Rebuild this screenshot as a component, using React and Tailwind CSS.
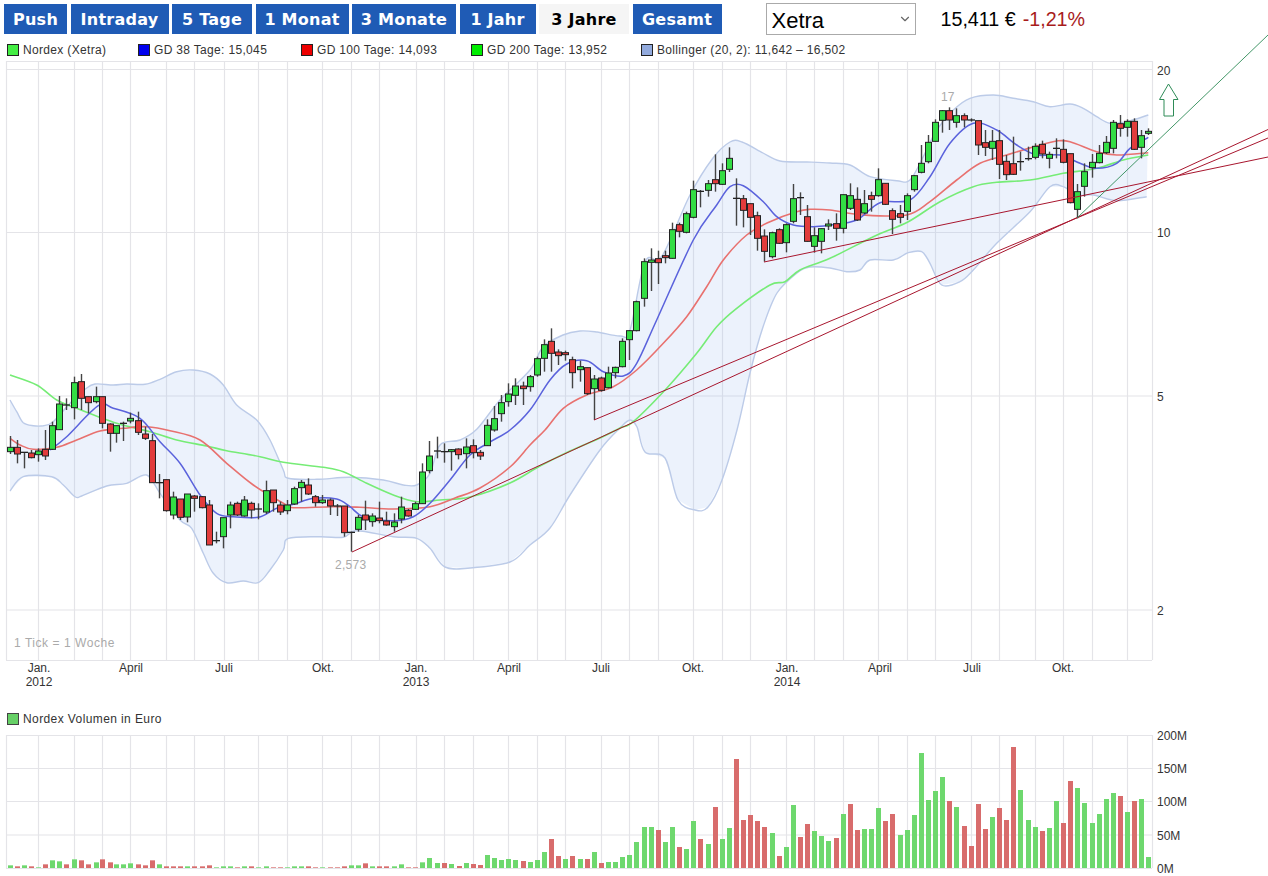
import React from 'react';
import { ChevronDown } from 'lucide-react';

const tabs = [
  { label: 'Push', width: 'w-[63px]' },
  { label: 'Intraday', width: 'w-[98px]' },
  { label: '5 Tage', width: 'w-[80px]' },
  { label: '1 Monat', width: 'w-[93px]' },
  { label: '3 Monate', width: 'w-[104px]' },
  { label: '1 Jahr', width: 'w-[76px]' },
  { label: '3 Jahre', width: 'w-[90px]', active: true },
  { label: 'Gesamt', width: 'w-[89px]' },
];

const legend = [
  { label: 'Nordex (Xetra)', color: 'bg-[#44ee44]', width: 'w-[131px]' },
  { label: 'GD 38 Tage: 15,045', color: 'bg-[#0000ee]', width: 'w-[163px]' },
  { label: 'GD 100 Tage: 14,093', color: 'bg-[#ee0000]', width: 'w-[170px]' },
  { label: 'GD 200 Tage: 13,952', color: 'bg-[#00ee00]', width: 'w-[170px]' },
  { label: 'Bollinger (20, 2): 11,642 – 16,502', color: 'bg-[#92aadd]', width: 'w-[260px]' },
];

// all data read from zoomed crops, so [x, y] are crop coords scaled 3x
const crop = (ox, oy, pts) => pts.map(([x, y]) => [ox + x / 3, oy + y / 3]);

// [x, type, bodyTop, bodyBottom, wickTop, wickBottom] g/r/d (d = doji tick)
const candleRows = (ox, oy, rows) =>
  rows.map(([x, t, a, b, h, l]) => ({
    x: ox + x / 3,
    t,
    top: oy + a / 3,
    bottom: oy + b / 3,
    high: oy + h / 3,
    low: oy + l / 3,
  }));

const candles = [
  ...candleRows(0, 360, [
    [31, 'g', 262, 275, 228, 282], [52, 'r', 262, 282, 240, 310], [73, 'd', 277, 277, 277, 325],
    [94, 'r', 279, 293, 270, 295], [115, 'g', 273, 284, 265, 305], [136, 'r', 268, 288, 210, 300],
    [157, 'g', 197, 268, 185, 270], [178, 'g', 132, 209, 108, 210], [199, 'd', 135, 135, 115, 150],
    [222, 'g', 68, 143, 50, 178], [244, 'r', 65, 115, 42, 150], [265, 'r', 110, 128, 110, 160],
    [287, 'g', 110, 125, 80, 130], [307, 'r', 110, 190, 110, 205], [329, 'r', 192, 220, 190, 275],
    [349, 'g', 197, 220, 197, 248], [370, 'd', 190, 190, 185, 243], [391, 'g', 175, 183, 158, 190],
    [415, 'r', 182, 217, 155, 225], [436, 'r', 222, 235, 200, 240], [457, 'r', 242, 368, 222, 368],
    [478, 'd', 368, 368, 342, 415], [499, 'r', 359, 452, 359, 455], [520, 'g', 411, 465, 395, 478],
    [541, 'r', 417, 472, 417, 480], [562, 'g', 402, 471, 402, 487], [583, 'r', 408, 415, 405, 455],
    [607, 'r', 410, 443, 408, 445], [628, 'r', 435, 555, 420, 555], [649, 'd', 542, 542, 515, 550],
    [670, 'g', 473, 530, 473, 565], [691, 'g', 435, 465, 425, 505], [712, 'r', 430, 465, 425, 468],
    [733, 'g', 420, 468, 408, 470], [754, 'r', 430, 450, 425, 475], [775, 'd', 447, 447, 430, 478],
    [799, 'g', 392, 456, 362, 462], [820, 'r', 390, 428, 390, 455], [841, 'r', 435, 456, 425, 465],
    [862, 'g', 435, 452, 420, 463], [883, 'g', 386, 432, 380, 435], [904, 'g', 367, 383, 360, 425],
    [925, 'r', 375, 402, 355, 405], [946, 'r', 410, 428, 405, 440], [967, 'g', 420, 428, 405, 432],
    [991, 'r', 420, 438, 415, 465], [1012, 'd', 438, 438, 432, 468], [1033, 'r', 438, 518, 438, 530],
    [1054, 'd', 517, 517, 515, 575], [1075, 'g', 472, 508, 465, 515], [1096, 'r', 465, 480, 422, 510],
    [1117, 'g', 468, 485, 460, 500], [1138, 'r', 474, 482, 425, 490], [1159, 'r', 483, 495, 455, 497],
    [1183, 'g', 486, 500, 460, 515], [1204, 'g', 441, 477, 410, 490], [1225, 'r', 451, 468, 447, 470],
    [1246, 'g', 431, 448, 425, 450], [1267, 'g', 336, 431, 310, 432], [1288, 'g', 288, 332, 243, 340],
  ]),
  ...candleRows(425, 380, [
    [35, 'd', 213, 213, 170, 235], [56, 'd', 215, 215, 190, 248], [77, 'g', 209, 215, 207, 272],
    [100, 'r', 207, 224, 205, 238], [122, 'g', 201, 221, 175, 265], [144, 'r', 197, 218, 178, 235],
    [165, 'r', 217, 228, 210, 240], [185, 'g', 136, 197, 118, 198],
  ]),
  ...candleRows(430, 130, [
    [191, 'g', 866, 900, 828, 905], [212, 'g', 818, 851, 795, 875], [233, 'g', 792, 815, 760, 830],
    [254, 'g', 768, 796, 745, 825], [278, 'r', 768, 776, 755, 825], [299, 'g', 740, 770, 735, 785],
    [320, 'g', 686, 735, 680, 740], [341, 'g', 644, 685, 628, 725], [362, 'r', 634, 670, 595, 725],
    [383, 'r', 666, 677, 658, 705], [404, 'r', 668, 674, 662, 692], [426, 'r', 689, 728, 680, 775],
    [450, 'g', 710, 719, 692, 755], [471, 'r', 713, 791, 713, 795], [492, 'g', 747, 776, 735, 870],
    [513, 'r', 744, 781, 740, 785], [534, 'g', 729, 773, 710, 775], [555, 'g', 712, 728, 710, 745],
    [575, 'g', 634, 710, 625, 712], [596, 'g', 602, 629, 600, 690], [617, 'g', 515, 602, 512, 604],
    [642, 'g', 395, 505, 385, 530], [663, 'g', 390, 397, 355, 483], [684, 'r', 386, 398, 362, 462],
    [705, 'r', 377, 383, 362, 400], [726, 'g', 299, 385, 278, 386], [747, 'r', 284, 304, 278, 322],
    [768, 'g', 251, 307, 245, 310], [789, 'g', 179, 262, 152, 265], [810, 'd', 184, 184, 180, 232],
    [834, 'g', 161, 181, 150, 200], [855, 'r', 149, 161, 73, 185], [876, 'g', 122, 163, 100, 165],
    [897, 'g', 85, 118, 52, 126], [918, 'd', 205, 205, 145, 287], [939, 'r', 206, 241, 195, 292],
    [960, 'r', 221, 262, 221, 315], [981, 'r', 257, 325, 245, 362], [1002, 'r', 318, 364, 298, 395],
    [1026, 'g', 308, 380, 305, 385], [1047, 'r', 299, 340, 295, 342], [1068, 'g', 284, 338, 280, 367],
    [1089, 'g', 206, 274, 162, 280], [1110, 'd', 203, 203, 187, 255], [1131, 'r', 260, 334, 225, 335],
    [1152, 'g', 317, 349, 292, 368], [1173, 'g', 296, 334, 295, 370], [1194, 'g', 282, 287, 268, 300],
  ]),
  ...candleRows(830, 80, [
    [18, 'r', 431, 445, 400, 482], [40, 'g', 344, 445, 344, 460], [61, 'g', 347, 385, 310, 390],
    [82, 'r', 358, 420, 322, 423], [103, 'g', 371, 399, 330, 402], [124, 'r', 347, 358, 335, 395],
    [145, 'g', 299, 347, 265, 350], [166, 'r', 310, 373, 310, 375], [187, 'r', 392, 418, 385, 462],
    [211, 'r', 401, 412, 375, 430], [232, 'g', 347, 394, 340, 420], [253, 'g', 287, 329, 285, 335],
    [274, 'g', 250, 277, 195, 280], [295, 'g', 187, 245, 165, 250], [316, 'g', 127, 184, 118, 185],
    [337, 'g', 92, 121, 90, 158], [358, 'r', 92, 120, 82, 150], [379, 'g', 107, 127, 85, 143],
    [403, 'r', 107, 120, 100, 142], [424, 'd', 120, 120, 115, 125], [445, 'r', 122, 195, 122, 225],
    [466, 'r', 188, 202, 150, 228], [487, 'g', 184, 205, 150, 240], [508, 'r', 182, 253, 150, 297],
    [529, 'r', 244, 284, 225, 300], [550, 'r', 251, 283, 170, 285], [571, 'd', 245, 245, 215, 272],
    [595, 'd', 236, 236, 200, 242], [616, 'g', 199, 232, 190, 238], [637, 'r', 193, 222, 182, 235],
    [658, 'g', 223, 235, 215, 265], [679, 'd', 205, 205, 175, 235], [700, 'r', 208, 247, 178, 250],
    [721, 'r', 221, 368, 221, 370], [742, 'g', 335, 388, 312, 415], [763, 'g', 275, 319, 250, 350],
    [787, 'g', 247, 263, 222, 293], [808, 'g', 220, 248, 195, 250], [829, 'g', 187, 218, 168, 222],
    [850, 'g', 127, 205, 120, 220], [871, 'r', 131, 145, 105, 170], [892, 'g', 124, 142, 118, 170],
    [913, 'r', 124, 208, 115, 210], [934, 'g', 167, 202, 150, 235], [955, 'g', 154, 160, 145, 165],
  ]),
];

const bollUpper = [
  ...crop(0, 360, [[30, 120], [50, 155], [70, 188], [100, 197], [130, 197], [160, 185], [210, 130], [255, 88], [285, 72], [340, 75], [380, 72], [435, 73], [480, 58], [530, 35], [580, 30], [630, 42], [670, 75], [710, 135], [770, 180], [810, 240], [850, 330], [865, 355], [950, 358], [1050, 352], [1150, 360], [1210, 375], [1250, 375], [1290, 340]]),
  [440, 445], [460, 440], [477, 429], [500, 400], [530, 370], [543, 347], [563, 335], [580, 331], [597, 332], [620, 336], [630, 330],
  [645, 262], [662, 256], [690, 195], [713, 158], [730, 142], [742, 142], [763, 153], [780, 161], [807, 162], [830, 163],
  ...crop(830, 80, [[60, 255], [120, 290], [200, 302], [240, 300], [280, 230], [320, 150], [370, 90], [420, 55], [490, 45], [550, 55], [610, 65], [660, 80], [720, 72], [760, 85], [800, 110], [840, 130], [890, 125], [955, 105]]),
];

const bollLower = [
  ...crop(0, 360, [[30, 393], [70, 350], [155, 350], [190, 375], [225, 410], [245, 408], [320, 378], [380, 370], [440, 345], [480, 400], [540, 480], [575, 505], [610, 580], [640, 640], [680, 668], [730, 663], [775, 668], [810, 630], [850, 570], [865, 535], [960, 530], [1030, 532], [1070, 512], [1180, 530], [1250, 535], [1290, 565]]),
  [445, 567], [470, 568], [510, 562], [530, 545], [550, 528], [570, 495], [600, 450], [620, 428], [630, 420], [637, 427], [645, 452], [665, 458], [678, 500], [695, 510], [708, 507], [722, 480], [737, 430], [750, 373], [763, 327], [777, 293], [797, 273], [810, 267], [830, 268],
  ...crop(830, 80, [[50, 575], [90, 570], [120, 540], [190, 540], [235, 518], [275, 515], [300, 550], [335, 615], [390, 605], [430, 570], [500, 490], [600, 395], [660, 320], [700, 320], [740, 345], [790, 345], [860, 362], [950, 350]]),
];

const gd200 = [
  ...crop(0, 360, [[30, 45], [110, 75], [170, 120], [230, 145], [350, 190], [450, 215], [530, 240], [620, 258], [680, 272], [780, 290], [850, 307], [970, 322], [1030, 335], [1100, 370], [1180, 405], [1250, 425]]),
  [440, 500], [470, 497], [510, 483], [540, 466], [570, 451], [600, 438], [620, 428],
  ...crop(430, 130, [[610, 875], [710, 775], [800, 670], [860, 590], [920, 535], [1020, 465], [1065, 455], [1110, 420], [1200, 385]]),
  ...crop(830, 80, [[130, 470], [235, 425], [330, 365], [430, 320], [500, 307], [600, 300], [700, 280], [800, 265], [880, 240], [955, 225]]),
];

const gd100 = [
  ...crop(0, 360, [[30, 235], [60, 255], [100, 268], [170, 262], [230, 240], [300, 213], [370, 205], [440, 200], [510, 212], [600, 240], [680, 310], [760, 375], [850, 430], [880, 443], [1000, 440], [1080, 442], [1180, 447], [1290, 440]]),
  [455, 498], [480, 488], [510, 467], [530, 445],
  ...crop(430, 130, [[345, 900], [400, 835], [470, 795], [550, 770], [620, 720], [700, 640], [770, 560], [830, 470], [880, 390], [950, 315], [1020, 275], [1100, 245], [1140, 238], [1200, 240]]),
  ...crop(830, 80, [[100, 405], [230, 405], [300, 365], [380, 300], [450, 250], [530, 225], [620, 198], [680, 183], [720, 185], [800, 215], [860, 225], [955, 218]]),
];

const gd38 = [
  ...crop(0, 360, [[150, 270], [200, 230], [295, 137], [340, 145], [420, 175], [480, 245], [540, 310], [600, 405], [650, 460], [700, 470], [775, 472], [830, 445], [880, 433], [940, 415], [1010, 417], [1050, 440], [1090, 470], [1180, 482], [1240, 470], [1290, 430]]),
  [450, 480], [470, 455], [490, 442],
  ...crop(430, 130, [[240, 900], [300, 840], [360, 750], [410, 702], [470, 692], [520, 725], [580, 738], [620, 700], [680, 570], [790, 330], [860, 225], [900, 170], [940, 167], [1000, 215], [1040, 260], [1090, 285], [1150, 290], [1200, 285]]),
  ...crop(830, 80, [[80, 420], [150, 368], [240, 360], [300, 290], [360, 190], [430, 130], [500, 150], [560, 195], [620, 225], [690, 225], [750, 250], [800, 265], [860, 250], [900, 205], [955, 172]]),
];

const volRows = (ox, rows) => rows.map(([x, t, h]) => ({ x: ox + x / 3, t, h: h / 3 }));

const volumes = [
  ...volRows(0, [
    [31, 'g', 8], [52, 'r', 5], [73, 'g', 8], [94, 'r', 5], [115, 'g', 2], [136, 'r', 11], [157, 'g', 23], [178, 'g', 20], [199, 'r', 11], [222, 'g', 26], [243, 'r', 23], [265, 'r', 11], [287, 'g', 17], [307, 'r', 26], [329, 'r', 17], [349, 'g', 11], [370, 'g', 11], [391, 'g', 14], [415, 'r', 11], [436, 'r', 8], [457, 'r', 23], [478, 'g', 11], [499, 'r', 5], [520, 'r', 5], [541, 'r', 5], [562, 'g', 5], [583, 'r', 5], [607, 'r', 5], [628, 'r', 8], [649, 'g', 2], [670, 'g', 5], [691, 'g', 5], [712, 'r', 2], [733, 'g', 5], [754, 'r', 5], [775, 'g', 2], [799, 'g', 5], [820, 'r', 2], [841, 'r', 2], [862, 'g', 2], [883, 'g', 5], [904, 'g', 5], [925, 'r', 5], [946, 'r', 2], [967, 'g', 2], [991, 'r', 2], [1012, 'r', 2], [1033, 'r', 5], [1054, 'g', 8], [1075, 'g', 8], [1096, 'r', 14], [1117, 'g', 5], [1138, 'r', 5], [1159, 'r', 5], [1183, 'g', 5], [1204, 'g', 11], [1225, 'r', 2], [1246, 'r', 2], [1267, 'g', 17], [1288, 'g', 30],
  ]),
  ...volRows(430, [
    [20, 'g', 15], [41, 'r', 15], [62, 'g', 12], [86, 'r', 6], [107, 'g', 15], [128, 'r', 12], [149, 'r', 9], [170, 'g', 39], [191, 'g', 30], [212, 'g', 24], [233, 'g', 27], [254, 'g', 24], [278, 'r', 21], [299, 'g', 18], [320, 'g', 24], [341, 'g', 48], [362, 'r', 87], [383, 'r', 36], [404, 'g', 27], [426, 'r', 36], [450, 'g', 27], [471, 'r', 27], [492, 'g', 48], [513, 'r', 15], [534, 'g', 18], [555, 'g', 18], [575, 'g', 33], [596, 'g', 39], [617, 'g', 78], [642, 'g', 123], [663, 'g', 123], [684, 'r', 114], [705, 'g', 78], [726, 'g', 123], [747, 'r', 63], [768, 'g', 57], [789, 'g', 141], [810, 'r', 87], [834, 'g', 72], [855, 'r', 183], [876, 'g', 87], [897, 'g', 120], [918, 'r', 327], [939, 'r', 144], [960, 'r', 159], [981, 'r', 141], [1002, 'r', 123], [1026, 'g', 105], [1047, 'r', 36], [1068, 'g', 63], [1089, 'g', 189], [1110, 'r', 93], [1131, 'r', 132], [1152, 'g', 111], [1173, 'g', 96], [1194, 'g', 81],
  ]),
  ...volRows(830, [
    [18, 'r', 90], [40, 'g', 162], [61, 'r', 192], [82, 'r', 114], [103, 'g', 117], [124, 'g', 117], [145, 'g', 180], [166, 'r', 141], [187, 'r', 162], [211, 'g', 99], [232, 'g', 114], [253, 'g', 159], [274, 'g', 345], [295, 'g', 204], [316, 'g', 231], [337, 'g', 273], [358, 'r', 201], [379, 'g', 183], [403, 'r', 126], [424, 'r', 66], [445, 'r', 192], [466, 'r', 117], [487, 'g', 153], [508, 'r', 180], [529, 'r', 144], [550, 'r', 363], [571, 'g', 234], [595, 'g', 144], [616, 'g', 123], [637, 'r', 111], [658, 'g', 120], [679, 'g', 201], [700, 'r', 135], [721, 'r', 261], [742, 'g', 240], [763, 'g', 195], [787, 'g', 135], [808, 'g', 162], [829, 'g', 207], [850, 'g', 225], [871, 'r', 216], [892, 'g', 168], [913, 'r', 201], [934, 'g', 207], [955, 'g', 33],
  ]),
];

const vGrid = [38, 74, 102, 130, 166, 194, 224, 258, 287, 322, 351, 379, 416, 444, 473, 508, 537, 565, 601, 629, 658, 693, 722, 750, 786, 814, 843, 878, 907, 935, 971, 999, 1035, 1063, 1092, 1127, 1152];

const months = [
  { x: 39, label: 'Jan.', year: '2012' }, { x: 131, label: 'April' }, { x: 224, label: 'Juli' }, { x: 323, label: 'Okt.' },
  { x: 416, label: 'Jan.', year: '2013' }, { x: 509, label: 'April' }, { x: 601, label: 'Juli' }, { x: 693, label: 'Okt.' },
  { x: 787, label: 'Jan.', year: '2014' }, { x: 880, label: 'April' }, { x: 972, label: 'Juli' }, { x: 1063, label: 'Okt.' },
];

const toPoints = (pts) => pts.map(([x, y]) => `${x.toFixed(1)},${y.toFixed(1)}`).join(' ');

// Catmull-Rom through the read points, keeps the averages from looking jagged
const smoothPath = (pts) => {
  let d = `M${pts[0][0].toFixed(1)} ${pts[0][1].toFixed(1)}`;
  for (let i = 0; i < pts.length - 1; i++) {
    const p0 = pts[i - 1] || pts[i];
    const p1 = pts[i];
    const p2 = pts[i + 1];
    const p3 = pts[i + 2] || p2;
    const c1x = p1[0] + (p2[0] - p0[0]) / 6;
    const c1y = p1[1] + (p2[1] - p0[1]) / 6;
    const c2x = p2[0] - (p3[0] - p1[0]) / 6;
    const c2y = p2[1] - (p3[1] - p1[1]) / 6;
    d += ` C${c1x.toFixed(1)} ${c1y.toFixed(1)} ${c2x.toFixed(1)} ${c2y.toFixed(1)} ${p2[0].toFixed(1)} ${p2[1].toFixed(1)}`;
  }
  return d;
};

const Candle = ({ x, t, top, bottom, high, low }) => {
  const cx = Math.round(x) + 0.5;
  if (t === 'd') {
    return (
      <g stroke="#222">
        <line x1={cx} x2={cx} y1={high} y2={low} stroke="#444" strokeWidth="1.4" />
        <line x1={cx - 3.5} x2={cx + 3.5} y1={top} y2={top} strokeWidth="1.3" />
      </g>
    );
  }
  return (
    <g>
      <line x1={cx} x2={cx} y1={high} y2={low} stroke="#444" strokeWidth="1.4" />
      <rect
        x={cx - 3}
        y={top}
        width="6"
        height={Math.max(bottom - top, 2)}
        fill={t === 'g' ? '#33dd44' : '#e23c3c'}
        stroke="#222"
        strokeWidth="1"
      />
    </g>
  );
};

const PriceChart = () => (
  <svg viewBox="0 61 1268 640" width="1268" height="640" className="block overflow-visible">
    <g stroke="#e4e4e8" strokeWidth="1.2">
      <line x1="6" x2="1152" y1="61.5" y2="61.5" />
      <line x1="6" x2="1152" y1="660.5" y2="660.5" />
      {[69.5, 232.5, 396, 610].map((y) => (
        <line key={y} x1="6" x2="1152" y1={y} y2={y} />
      ))}
      <line x1="6.5" x2="6.5" y1="61" y2="660" />
      {vGrid.map((x) => (
        <line key={x} x1={x + 0.5} x2={x + 0.5} y1="61" y2="660" />
      ))}
    </g>

    <path
      d={`${smoothPath(bollUpper)} L${toPoints([...bollLower].reverse())} Z`}
      fill="#93b5ec"
      fillOpacity="0.18"
    />
    <path d={smoothPath(bollUpper)} fill="none" stroke="#bccbe8" strokeWidth="1.4" />
    <path d={smoothPath(bollLower)} fill="none" stroke="#bccbe8" strokeWidth="1.4" />

    <path d={smoothPath(gd200)} fill="none" stroke="#76ec76" strokeWidth="1.6" />
    <path d={smoothPath(gd100)} fill="none" stroke="#e8716f" strokeWidth="1.6" />
    <path d={smoothPath(gd38)} fill="none" stroke="#5a62dc" strokeWidth="1.5" />

    {candles.map((c) => (
      <Candle key={c.x} {...c} />
    ))}

    <g stroke="#a8162e" strokeWidth="1" fill="none">
      <line x1="352" y1="552" x2="1268" y2="129.5" />
      <line x1="594" y1="420" x2="1268" y2="138" />
      <line x1="764" y1="262" x2="1268" y2="157" />
    </g>
    <line x1="1077" y1="218" x2="1268" y2="35" stroke="#2e8b57" strokeWidth="0.9" />
    <path
      d="M1168.5 84 L1178 99.5 L1173.5 99.5 L1173.5 116 L1164 116 L1164 99.5 L1159.5 99.5 Z"
      fill="#fff"
      stroke="#2e8b57"
    />

    <g fontSize="12" fill="#333">
      <text x="1157" y="74.5">20</text>
      <text x="1157" y="237">10</text>
      <text x="1157" y="400.5">5</text>
      <text x="1157" y="614.5">2</text>
      {months.map((m) => (
        <g key={m.x} textAnchor="middle">
          <text x={m.x} y="672">{m.label}</text>
          {m.year && <text x={m.x} y="686">{m.year}</text>}
        </g>
      ))}
    </g>
    <g fontSize="12" fill="#aaa">
      <text x="941" y="101">17</text>
      <text x="335" y="569" letterSpacing="0.3">2,573</text>
      <text x="14" y="647" letterSpacing="0.55">1 Tick = 1 Woche</text>
    </g>
  </svg>
);

const VolumeChart = () => (
  <svg viewBox="0 730 1268 146" width="1268" height="146" className="block">
    <g stroke="#e4e4e8" strokeWidth="1.2">
      {[735.5, 768.5, 801.5, 835, 868.5].map((y) => (
        <line key={y} x1="6" x2="1152" y1={y} y2={y} />
      ))}
      <line x1="6.5" x2="6.5" y1="735" y2="868" />
      {vGrid.map((x) => (
        <line key={x} x1={x + 0.5} x2={x + 0.5} y1="735" y2="868" />
      ))}
    </g>
    {volumes.map((v) => (
      <rect
        key={v.x}
        x={Math.round(v.x) - 2}
        y={868 - v.h}
        width="5"
        height={v.h}
        fill={v.t === 'g' ? '#6ed86e' : '#d86c6c'}
      />
    ))}
    <g fontSize="12" fill="#333">
      <text x="1157" y="740">200M</text>
      <text x="1157" y="773">150M</text>
      <text x="1157" y="806">100M</text>
      <text x="1157" y="840">50M</text>
      <text x="1157" y="873">0M</text>
    </g>
  </svg>
);

export default function App() {
  return (
    <div className="h-[876px] w-[1268px] overflow-hidden bg-white font-['Liberation_Sans',Arial,sans-serif] text-black">
      {/* Zeitraum + Boerse */}
      <div className="flex h-[38px] items-start pt-1 pl-1">
        <div className="flex gap-[3.5px]">
          {tabs.map((tab) => (
            <button
              key={tab.label}
              className={`${tab.width} flex h-[30px] items-center justify-center pt-[2px] font-['DejaVu_Sans',sans-serif] text-[16px] font-bold tracking-[0.25px] ${
                tab.active ? 'bg-[#f5f5f5] text-black' : 'bg-[#1f5bb5] text-white'
              }`}
            >
              {tab.label}
            </button>
          ))}
        </div>
        <div className="relative ml-11 -mt-px">
          <select
            defaultValue="Xetra"
            className="h-[32px] w-[150px] appearance-none border-[1.5px] border-[#aaaaaa] bg-white pl-[5px] text-[22px]"
          >
            <option>Xetra</option>
          </select>
          <ChevronDown size={14} strokeWidth={2} className="pointer-events-none absolute top-[9px] right-[4px] text-[#666]" />
        </div>
        <div className="ml-[25px] flex h-[30px] items-center gap-[7px] pt-[1px] text-[19.7px]">
          <span>15,411 €</span>
          <span className="text-[#a81c1c]">-1,21%</span>
        </div>
      </div>

      {/* Legende Kurs */}
      <div className="flex h-[23px] items-center pl-[7px] text-[12px] tracking-[0.33px] text-[#333]">
        {legend.map((item) => (
          <div key={item.label} className={`${item.width} flex items-center gap-1`}>
            <span className={`${item.color} h-3 w-3 border border-[#222]`} />
            <span>{item.label}</span>
          </div>
        ))}
      </div>

      <PriceChart />

      {/* Legende Volumen */}
      <div className="mt-[7px] flex h-[22px] items-center gap-1 pl-[7px] text-[12px] tracking-[0.4px] text-[#333]">
        <span className="h-3 w-3 border border-[#444] bg-[#66d066]" />
        <span>Nordex Volumen in Euro</span>
      </div>

      <VolumeChart />
    </div>
  );
}
